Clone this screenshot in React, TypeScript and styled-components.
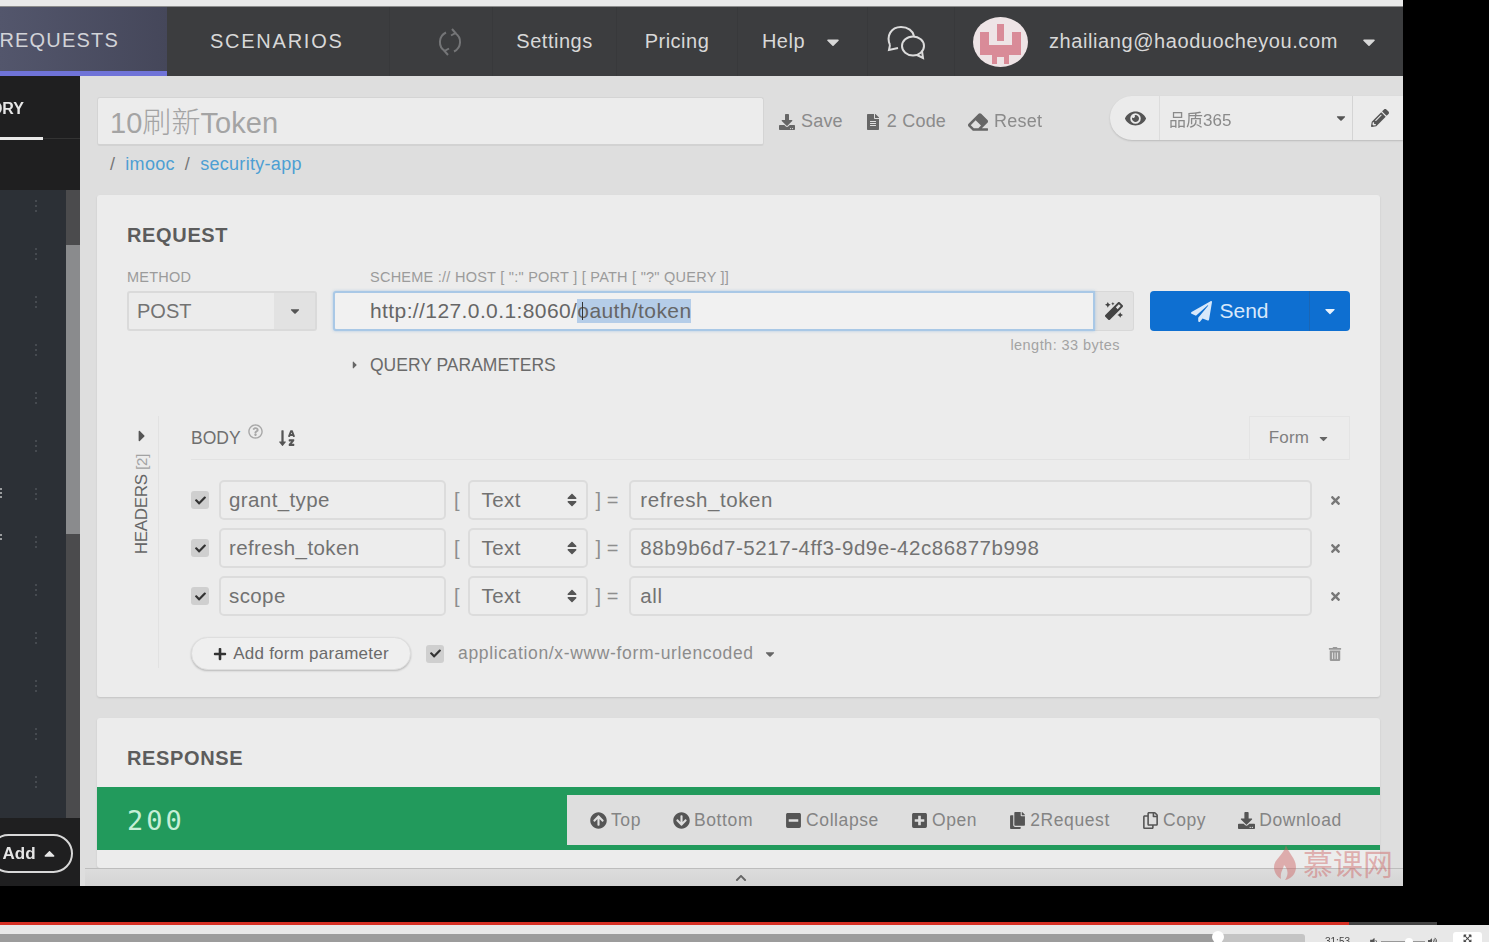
import React from 'react'
import styled, { createGlobalStyle } from 'styled-components'
import {
  FaArrowCircleDown,
  FaArrowCircleUp,
  FaCaretDown,
  FaCaretRight,
  FaCaretUp,
  FaCheck,
  FaChevronUp,
  FaDownload,
  FaEraser,
  FaEye,
  FaFileAlt,
  FaMagic,
  FaMinusSquare,
  FaPaperPlane,
  FaPencilAlt,
  FaPlus,
  FaPlusSquare,
  FaRegCopy,
  FaRegQuestionCircle,
  FaSort,
  FaSortAlphaDown,
  FaCopy,
  FaTimes,
  FaTrashAlt,
  FaVolumeDown,
  FaVolumeUp,
  FaExpandArrowsAlt,
} from 'react-icons/fa'

const GlobalStyle = createGlobalStyle`
  html, body {
    margin: 0;
    padding: 0;
    background: #000;
    overflow: hidden;
  }
  * { box-sizing: border-box; }
`

const Page = styled.div`
  width: 1489px;
  height: 942px;
  background: #000;
  overflow: hidden;
  display: flex;
  flex-direction: column;
  font-family: "Liberation Sans", Arial, sans-serif;
`

const Frame = styled.div`
  position: relative;
  width: 1403px;
  height: 886px;
  flex: none;
  display: flex;
  flex-direction: column;
  filter: blur(0.6px);
`

const TopStrip = styled.div`
  height: 7px;
  background: #e9e9e9;
  border-bottom: 1px solid #8c8c8c;
`

const Nav = styled.div`
  height: 69px;
  display: flex;
  background: #3c3d3f;
  color: #d8d8d8;
`

const RequestsTab = styled.div`
  width: 167px;
  display: flex;
  justify-content: flex-end;
  align-items: center;
  padding: 2px 48px 0 0;
  overflow: hidden;
  font-size: 20px;
  letter-spacing: 1.2px;
  white-space: nowrap;
  color: #d2d3d8;
  background: linear-gradient(90deg, #53566c, #45475a);
  border-bottom: 5px solid #6f73d8;
`

const NavTab = styled.div<{ $w: number }>`
  width: ${({ $w }) => $w}px;
  display: flex;
  align-items: center;
  justify-content: center;
  gap: 18px;
  font-size: 20px;
  letter-spacing: 0.5px;
  white-space: nowrap;
  border-right: 1px solid #38393b;
`

const ScenariosTab = styled(NavTab)`
  justify-content: flex-start;
  padding-left: 43px;
  letter-spacing: 1.75px;
`

const SyncTab = styled(NavTab)`
  padding-left: 18px;
`

const ChatTab = styled(NavTab)`
  padding-right: 10px;
`

const UserBox = styled.div`
  flex: 1;
  display: flex;
  align-items: center;
  padding-left: 18px;
  gap: 21px;
  font-size: 20px;
  letter-spacing: 0.58px;
`

const Body = styled.div`
  flex: 1;
  min-height: 0;
  display: flex;
`

const Sidebar = styled.div`
  width: 80px;
  flex: none;
  display: flex;
  flex-direction: column;
  background: #1f1f20;
  color: #e6e6e6;
`

const SideTabs = styled.div`
  height: 114px;
  flex: none;
`

const SideTab = styled.div`
  width: 43px;
  height: 64px;
  display: flex;
  justify-content: flex-end;
  align-items: center;
  padding: 4px 19px 0 0;
  overflow: hidden;
  font-size: 16px;
  font-weight: bold;
  border-bottom: 3px solid #e8e8e8;
`

const SideRule = styled.div`
  height: 1px;
  margin-top: -2px;
  margin-left: 43px;
  background: #333;
`

const SideList = styled.div`
  flex: 1;
  display: flex;
  background: #2c3036;
`

const SideRows = styled.div`
  flex: 1;
  background-image:
    linear-gradient(
      180deg,
      #464a50 0 2px,
      transparent 2px 5px,
      #464a50 5px 7px,
      transparent 7px 10px,
      #464a50 10px 12px,
      transparent 12px
    ),
    linear-gradient(
      180deg,
      #9a9c9e 0 2px,
      transparent 2px 4px,
      #9a9c9e 4px 6px,
      transparent 6px 8px,
      #9a9c9e 8px 10px,
      transparent 10px 46px,
      #9a9c9e 46px 48px,
      transparent 48px 50px,
      #9a9c9e 50px 52px,
      transparent 52px
    );
  background-size: 2px 48px, 2px 70px;
  background-position: 35px 10px, 0 298px;
  background-repeat: repeat-y, no-repeat;
`

const ScrollTrack = styled.div`
  width: 14px;
  padding-top: 55px;
  padding-bottom: 284px;
  background: #4b4b4d;
`

const ScrollThumb = styled.div`
  height: 100%;
  background: #8a8b8d;
`

const SideFooter = styled.div`
  height: 68px;
  flex: none;
  display: flex;
  align-items: center;
`

const AddPill = styled.div`
  width: 84px;
  height: 39px;
  margin-left: -11px;
  margin-top: 3px;
  display: flex;
  align-items: center;
  justify-content: center;
  gap: 5px;
  padding-right: 2px;
  border: 2px solid #d8d8d8;
  border-radius: 20px;
  font-size: 17px;
  font-weight: bold;
`

const Main = styled.div`
  flex: 1;
  min-width: 0;
  display: flex;
  flex-direction: column;
  background: #dedede;
  padding: 21px 0 0 17px;
  color: #6e6e6e;
`

const TitleRow = styled.div`
  height: 50px;
  flex: none;
  display: flex;
  align-items: flex-start;
`

const TitleInput = styled.div`
  width: 667px;
  height: 49px;
  flex: none;
  display: flex;
  align-items: center;
  padding: 0 0 2px 12px;
  background: #ececec;
  border: 1px solid #d4d4d4;
  border-bottom: 2px solid #d2d2d2;
  border-radius: 3px;
  font-family: "Liberation Sans", "Noto Sans CJK SC", sans-serif;
  font-size: 29px;
  font-weight: 300;
  letter-spacing: 0.05px;
  color: #a4a4a4;
`

const TitleActions = styled.div`
  display: flex;
  align-items: center;
  gap: 22px;
  height: 49px;
  padding-left: 15px;
`

const TitleAction = styled.div<{ $iconSize?: number }>`
  display: flex;
  align-items: center;
  gap: 6px;
  font-size: 18px;
  letter-spacing: 0.2px;
  color: #8b8b8b;
  svg { color: #666; font-size: ${({ $iconSize }) => $iconSize ?? 16}px; }
`

const EnvGroup = styled.div`
  margin-left: auto;
  width: 293px;
  height: 44px;
  margin-top: -1px;
  display: flex;
  align-items: center;
  background: #ebebeb;
  border-radius: 22px 0 0 22px;
  box-shadow: 0 1px 2px rgba(0, 0, 0, 0.16);
`

const EnvEye = styled.div`
  width: 50px;
  height: 100%;
  display: flex;
  align-items: center;
  justify-content: center;
  padding-left: 2px;
  border-right: 1px solid #dcdcdc;
  color: #555;
  font-size: 21px;
`

const EnvSelect = styled.div`
  flex: 1;
  height: 100%;
  display: flex;
  align-items: center;
  justify-content: space-between;
  padding: 0 4px 0 9px;
  font-family: "Liberation Sans", "Noto Sans CJK SC", sans-serif;
  font-size: 17px;
  color: #8a8a8a;
  border-right: 1px solid #d4d4d4;
  svg { color: #555; font-size: 14px; }
`

const EnvEdit = styled.div`
  width: 50px;
  height: 100%;
  display: flex;
  align-items: center;
  padding-left: 18px;
  font-size: 18px;
  color: #555;
`

const Breadcrumb = styled.div`
  height: 48px;
  flex: none;
  display: flex;
  align-items: flex-start;
  gap: 10px;
  padding: 7px 0 0 13px;
  font-size: 18px;
  letter-spacing: 0.3px;
  color: #777;
  a { color: #4d9fd3; }
`

const Card = styled.div`
  width: 1283px;
  flex: none;
  background: #ececec;
  border-radius: 3px;
  box-shadow: 0 1px 2px rgba(0, 0, 0, 0.12);
`

const RequestCard = styled(Card)`
  height: 502px;
  padding: 28px 30px 0 30px;
`

const ResponseCard = styled(Card)`
  height: 150px;
  margin-top: 21px;
  padding-top: 28px;
`

const SectionTitle = styled.div<{ $pad?: boolean }>`
  height: 24px;
  padding-left: ${({ $pad }) => ($pad ? 30 : 0)}px;
  font-size: 20px;
  font-weight: bold;
  letter-spacing: 0.65px;
  line-height: 24px;
  color: #5c5c5c;
`

const UrlLabels = styled.div`
  display: flex;
  margin-top: 22px;
  height: 17px;
  font-size: 14.5px;
  line-height: 17px;
  color: #9b9b9b;
  letter-spacing: 0.25px;
`

const MethodLabel = styled.div`
  width: 243px;
`

const UrlRow = styled.div`
  display: flex;
  margin-top: 5px;
  height: 40px;
`

const MethodSelect = styled.div`
  width: 190px;
  flex: none;
  display: flex;
  background: #ececec;
  border: 2px solid #dadada;
  border-radius: 3px;
  font-size: 20px;
  color: #737373;
`

const MethodValue = styled.div`
  flex: 1;
  display: flex;
  align-items: center;
  padding-left: 8px;
`

const MethodCaret = styled.div`
  width: 41px;
  display: flex;
  align-items: center;
  justify-content: center;
  background: #e2e2e2;
  font-size: 14px;
  color: #555;
`

const UrlInput = styled.div`
  position: relative;
  width: 762px;
  flex: none;
  margin-left: 16px;
  display: flex;
  align-items: center;
  padding-left: 35px;
  background: #f1f1f1;
  border: 2px solid #a9c8e6;
  border-radius: 3px 0 0 3px;
  box-shadow: 0 0 3px rgba(110, 165, 220, 0.5);
  font-size: 21px;
  letter-spacing: 0.4px;
  color: #666;
  white-space: pre;
  mark { background: #b5cde8; color: #666; }
`

const TextCursor = styled.div`
  position: absolute;
  left: 247px;
  top: 9px;
  width: 5px;
  height: 18px;
  border-left: 1px solid #333;
`

const WandButton = styled.div`
  width: 39px;
  flex: none;
  display: flex;
  align-items: center;
  justify-content: center;
  background: #e2e2e2;
  border: 1px solid #d8d8d8;
  border-left: none;
  border-radius: 0 3px 3px 0;
  color: #444;
  font-size: 18px;
`

const SendButton = styled.div`
  width: 200px;
  flex: none;
  margin-left: 16px;
  display: flex;
  background: #0e6fd1;
  border-radius: 4px;
  color: #d8e8fa;
  font-size: 21px;
`

const SendMain = styled.div`
  flex: 1;
  display: flex;
  align-items: center;
  justify-content: center;
  gap: 7px;
  padding-left: 1px;
  border-right: 1px solid #1a66b5;
`

const SendCaret = styled.div`
  width: 40px;
  display: flex;
  align-items: center;
  justify-content: center;
  font-size: 16px;
  color: #e8f2fc;
`

const LengthNote = styled.div`
  width: 993px;
  height: 16px;
  margin-top: 6px;
  text-align: right;
  font-size: 14.5px;
  letter-spacing: 0.45px;
  line-height: 16px;
  color: #a3a3a3;
`

const QueryRow = styled.div`
  display: flex;
  align-items: center;
  gap: 9px;
  height: 24px;
  padding-left: 222px;
  font-size: 17.5px;
  color: #6a6a6a;
  svg { font-size: 12px; color: #666; }
`

const BodyArea = styled.div`
  display: flex;
  margin-top: 39px;
  height: 252px;
`

const HeadersRail = styled.div`
  width: 32px;
  flex: none;
  display: flex;
  flex-direction: column;
  align-items: center;
  padding: 11px 1px 0 0;
  margin-right: 32px;
  border-right: 1px solid #e2e2e2;
  svg { font-size: 18px; color: #555; }
`

const RailLabel = styled.div`
  writing-mode: vertical-rl;
  transform: rotate(180deg);
  margin-top: 9px;
  font-size: 17px;
  letter-spacing: -0.3px;
  color: #666;
  span { color: #a2a2a2; font-size: 15px; }
`

const BodyPanel = styled.div`
  flex: 1;
  min-width: 0;
  display: flex;
  flex-direction: column;
`

const BodyHead = styled.div`
  height: 44px;
  flex: none;
  display: flex;
  align-items: center;
  border-bottom: 1px solid #e2e2e2;
`

const BodyLabel = styled.div`
  display: flex;
  align-items: center;
  font-size: 17.5px;
  color: #6f6f6f;
  padding-top: 1px;
  sup {
    margin: -12px 0 0 7px;
    font-size: 15px;
    color: #a8a8a8;
    line-height: 1;
  }
`

const SortIcon = styled.div`
  margin-left: 15px;
  font-size: 18px;
  color: #555;
  display: flex;
`

const FormTab = styled.div`
  margin-left: auto;
  width: 101px;
  height: 44px;
  display: flex;
  align-items: center;
  justify-content: center;
  gap: 8px;
  border: 1px solid #e4e4e4;
  border-bottom: none;
  font-size: 17px;
  letter-spacing: 0.2px;
  color: #808080;
  svg { font-size: 13px; color: #666; }
`

const Rows = styled.div`
  margin-top: 20px;
  display: flex;
  flex-direction: column;
  gap: 8px;
`

const ParamRow = styled.div`
  display: flex;
  align-items: center;
  height: 40px;
`

const CheckBox = styled.div`
  width: 18px;
  height: 18px;
  flex: none;
  display: flex;
  align-items: center;
  justify-content: center;
  background: #cfcfcf;
  border-radius: 3px;
  color: #333;
  font-size: 11px;
`

const FieldBox = styled.div`
  height: 40px;
  display: flex;
  align-items: center;
  background: #ededed;
  border: 2px solid #dcdcdc;
  border-radius: 5px;
  font-size: 20.5px;
  letter-spacing: 0.4px;
  color: #727272;
`

const KeyField = styled(FieldBox)`
  width: 227px;
  margin-left: 10px;
  padding-left: 8px;
`

const Bracket = styled.div`
  margin-left: 8px;
  font-size: 20px;
  color: #8e8e8e;
  white-space: pre;
`

const TypeField = styled(FieldBox)`
  width: 120px;
  margin-left: 8px;
  padding: 0 6px 0 12px;
  justify-content: space-between;
  svg { font-size: 16px; color: #555; }
`

const ValueField = styled(FieldBox)`
  width: 683px;
  margin-left: 11px;
  padding-left: 9px;
  letter-spacing: 0.55px;
`

const RemoveIcon = styled.div`
  margin-left: 17px;
  display: flex;
  font-size: 13px;
  color: #777;
`

const AddRow = styled.div`
  margin-top: 21px;
  display: flex;
  align-items: center;
  height: 33px;
`

const AddParamButton = styled.div`
  width: 220px;
  height: 33px;
  display: flex;
  align-items: center;
  justify-content: center;
  gap: 6px;
  background: #efefef;
  border: 1px solid #dedede;
  border-radius: 17px;
  box-shadow: 0 1px 2px rgba(0, 0, 0, 0.22);
  font-size: 17px;
  letter-spacing: 0.25px;
  color: #6a6a6a;
  svg { font-size: 14px; color: #333; }
`

const EncodingCheck = styled(CheckBox)`
  margin-left: 15px;
`

const EncodingLabel = styled.div`
  display: flex;
  align-items: center;
  gap: 9px;
  margin-left: 14px;
  font-size: 17.5px;
  letter-spacing: 0.65px;
  color: #8c8c8c;
  svg { font-size: 14px; color: #666; }
`

const TrashIcon = styled.div`
  margin-left: auto;
  margin-right: 8px;
  display: flex;
  font-size: 14px;
  color: #999;
`

const StatusBar = styled.div`
  height: 63px;
  margin-top: 17px;
  display: flex;
  background: #229a5c;
`

const StatusCode = styled.div`
  width: 470px;
  flex: none;
  display: flex;
  align-items: center;
  padding: 3px 0 0 30px;
  font-family: "DejaVu Sans Mono", monospace;
  font-size: 27px;
  letter-spacing: 3px;
  color: #c6efd6;
`

const ResponseTools = styled.div`
  flex: 1;
  margin: 8px 0 5px;
  display: flex;
  align-items: center;
  gap: 32px;
  padding-left: 23px;
  background: #dedede;
`

const ToolItem = styled.div`
  display: flex;
  align-items: center;
  gap: 4px;
  font-size: 17.5px;
  letter-spacing: 0.6px;
  color: #848484;
  white-space: nowrap;
  svg { font-size: 17px; color: #555; }
`

const BottomBar = styled.div`
  flex: 1;
  display: flex;
  align-items: flex-end;
  justify-content: center;
  margin-left: -12px;
  padding: 0 6px 2px 0;
  font-size: 12px;
  color: #666;
  background: linear-gradient(180deg, #dcdcdc, #d4d4d4);
  border-top: 1px solid #bdbdbd;
`

const Watermark = styled.div`
  position: absolute;
  left: 1273px;
  top: 844px;
  display: flex;
  align-items: center;
  gap: 6px;
  font-family: "Noto Sans CJK SC", sans-serif;
  font-size: 30px;
  line-height: 36px;
  color: rgba(205, 95, 95, 0.45);
`

const VideoGap = styled.div`
  height: 36px;
  flex: none;
`

const ProgressLine = styled.div`
  height: 3px;
  flex: none;
  width: 1437px;
  background: linear-gradient(90deg, #d63024 0 1349px, #444 1349px);
`

const ControlBar = styled.div`
  flex: 1;
  display: flex;
  align-items: flex-start;
  background: #e8e8e8;
  filter: blur(0.4px);
`

const SeekTrack = styled.div`
  position: relative;
  width: 1305px;
  height: 8px;
  margin-top: 9px;
  flex: none;
  background: linear-gradient(90deg, #9c9c9c 0 1218px, #c4c4c4 1218px);
  border-radius: 0 3px 0 0;
`

const SeekThumb = styled.div`
  position: absolute;
  left: 1212px;
  top: -3px;
  width: 12px;
  height: 12px;
  border-radius: 50%;
  background: #fff;
`

const TimeLabel = styled.div`
  margin: 11px 0 0 20px;
  font-size: 10px;
  color: #444;
`

const VolumeBox = styled.div`
  display: flex;
  align-items: center;
  gap: 3px;
  margin: 12px 0 0 19px;
  font-size: 9px;
  color: #555;
`

const VolumeLine = styled.div`
  position: relative;
  width: 44px;
  height: 2px;
  background: #999;
`

const VolumeKnob = styled.div`
  position: absolute;
  left: 24px;
  top: -3px;
  width: 8px;
  height: 8px;
  border-radius: 50%;
  background: #fff;
`

const FullscreenBtn = styled.div`
  width: 29px;
  height: 14px;
  margin: 7px 0 0 16px;
  display: flex;
  justify-content: center;
  padding-top: 2px;
  background: #fff;
  border-radius: 3px;
  font-size: 9px;
  color: #444;
`

const SyncIcon = () => (
  <svg width="30" height="30" viewBox="0 0 30 30" fill="none" stroke="#747577" strokeWidth="2">
    <path d="M11 5.5 A10.5 10.5 0 0 0 10 24" />
    <path d="M19 24.5 A10.5 10.5 0 0 0 20 6" />
    <path d="M17 2 l3.5 4 -4.5 2.5" />
    <path d="M13 28 l-3.5 -4 4.5 -2.5" />
  </svg>
)

const ChatIcon = () => (
  <svg width="40" height="36" viewBox="0 0 40 36" fill="none" stroke="#dcdcdc" strokeWidth="2">
    <path d="M4 21 C0 12 5 3 15 3 C22 3 27 7 28 12" />
    <path d="M4 21 L3 26 L12 24" />
    <ellipse cx="27" cy="22" rx="11" ry="9.5" />
    <path d="M31 31 L37 34 L36 27" />
  </svg>
)

const Avatar = () => (
  <svg width="55" height="50" viewBox="0 0 55 50">
    <ellipse cx="27.5" cy="25" rx="27.5" ry="25" fill="#eee4e6" />
    <path d="M24 7 H31 V24 H24 Z" fill="#d98b98" />
    <path
      d="M7 15 H16 V28 H39 V15 H48 V38 H36 V47 H31 V40 H24 V47 H19 V38 H7 Z"
      fill="#d98b98"
    />
  </svg>
)

const Flame = () => (
  <svg width="24" height="36" viewBox="0 0 24 36" fill="rgba(205,95,95,0.45)">
    <path d="M13 1 C15 9 23 14 23 23 C23 30 18 35 12 36 C16 31 15 25 11 21 C10 26 7 28 8 35 C3 32 1 27 1 23 C1 15 11 11 13 1 Z" />
  </svg>
)

const params = [
  { key: 'grant_type', value: 'refresh_token' },
  { key: 'refresh_token', value: '88b9b6d7-5217-4ff3-9d9e-42c86877b998' },
  { key: 'scope', value: 'all' },
]

const tools = [
  { icon: <FaArrowCircleUp />, label: 'Top' },
  { icon: <FaArrowCircleDown />, label: 'Bottom' },
  { icon: <FaMinusSquare />, label: 'Collapse' },
  { icon: <FaPlusSquare />, label: 'Open' },
  { icon: <FaCopy />, label: '2Request' },
  { icon: <FaRegCopy />, label: 'Copy' },
  { icon: <FaDownload />, label: 'Download' },
]

export default function App() {
  return (
    <Page>
      <GlobalStyle />
      <Frame>
        <TopStrip />
        <Nav>
          <RequestsTab>REQUESTS</RequestsTab>
          <ScenariosTab $w={223}>SCENARIOS</ScenariosTab>
          <SyncTab $w={103}><SyncIcon /></SyncTab>
          <NavTab $w={124}>Settings</NavTab>
          <NavTab $w={121}>Pricing</NavTab>
          <NavTab $w={130}>Help <FaCaretDown /></NavTab>
          <ChatTab $w={87}><ChatIcon /></ChatTab>
          <UserBox>
            <Avatar />
            zhailiang@haoduocheyou.com
            <FaCaretDown />
          </UserBox>
        </Nav>
        <Body>
          <Sidebar>
            <SideTabs>
              <SideTab>HISTORY</SideTab>
              <SideRule />
            </SideTabs>
            <SideList>
              <SideRows />
              <ScrollTrack><ScrollThumb /></ScrollTrack>
            </SideList>
            <SideFooter>
              <AddPill>Add <FaCaretUp /></AddPill>
            </SideFooter>
          </Sidebar>
          <Main>
            <TitleRow>
              <TitleInput>10刷新Token</TitleInput>
              <TitleActions>
                <TitleAction><FaDownload /> Save</TitleAction>
                <TitleAction><FaFileAlt /> 2 Code</TitleAction>
                <TitleAction $iconSize={20}><FaEraser /> Reset</TitleAction>
              </TitleActions>
              <EnvGroup>
                <EnvEye><FaEye /></EnvEye>
                <EnvSelect>品质365 <FaCaretDown /></EnvSelect>
                <EnvEdit><FaPencilAlt /></EnvEdit>
              </EnvGroup>
            </TitleRow>
            <Breadcrumb>
              <span>/</span><a>imooc</a><span>/</span><a>security-app</a>
            </Breadcrumb>
            <RequestCard>
              <SectionTitle>REQUEST</SectionTitle>
              <UrlLabels>
                <MethodLabel>METHOD</MethodLabel>
                <div>SCHEME :// HOST [ ":" PORT ] [ PATH [ "?" QUERY ]]</div>
              </UrlLabels>
              <UrlRow>
                <MethodSelect>
                  <MethodValue>POST</MethodValue>
                  <MethodCaret><FaCaretDown /></MethodCaret>
                </MethodSelect>
                <UrlInput>
                  http://127.0.0.1:8060/<mark>oauth/token</mark>
                  <TextCursor />
                </UrlInput>
                <WandButton><FaMagic /></WandButton>
                <SendButton>
                  <SendMain><FaPaperPlane /> Send</SendMain>
                  <SendCaret><FaCaretDown /></SendCaret>
                </SendButton>
              </UrlRow>
              <LengthNote>length: 33 bytes</LengthNote>
              <QueryRow><FaCaretRight /> QUERY PARAMETERS</QueryRow>
              <BodyArea>
                <HeadersRail>
                  <FaCaretRight />
                  <RailLabel>HEADERS <span>[2]</span></RailLabel>
                </HeadersRail>
                <BodyPanel>
                  <BodyHead>
                    <BodyLabel>BODY <sup><FaRegQuestionCircle /></sup></BodyLabel>
                    <SortIcon><FaSortAlphaDown /></SortIcon>
                    <FormTab>Form <FaCaretDown /></FormTab>
                  </BodyHead>
                  <Rows>
                    {params.map(p => (
                      <ParamRow key={p.key}>
                        <CheckBox><FaCheck /></CheckBox>
                        <KeyField>{p.key}</KeyField>
                        <Bracket>[</Bracket>
                        <TypeField>Text <FaSort /></TypeField>
                        <Bracket>{'] ='}</Bracket>
                        <ValueField>{p.value}</ValueField>
                        <RemoveIcon><FaTimes /></RemoveIcon>
                      </ParamRow>
                    ))}
                  </Rows>
                  <AddRow>
                    <AddParamButton><FaPlus /> Add form parameter</AddParamButton>
                    <EncodingCheck><FaCheck /></EncodingCheck>
                    <EncodingLabel>application/x-www-form-urlencoded <FaCaretDown /></EncodingLabel>
                    <TrashIcon><FaTrashAlt /></TrashIcon>
                  </AddRow>
                </BodyPanel>
              </BodyArea>
            </RequestCard>
            <ResponseCard>
              <SectionTitle $pad>RESPONSE</SectionTitle>
              <StatusBar>
                <StatusCode>200</StatusCode>
                <ResponseTools>
                  {tools.map(t => (
                    <ToolItem key={t.label}>{t.icon}{t.label}</ToolItem>
                  ))}
                </ResponseTools>
              </StatusBar>
            </ResponseCard>
            <BottomBar><FaChevronUp /></BottomBar>
          </Main>
        </Body>
        <Watermark><Flame />慕课网</Watermark>
      </Frame>
      <VideoGap />
      <ProgressLine />
      <ControlBar>
        <SeekTrack><SeekThumb /></SeekTrack>
        <TimeLabel>31:53</TimeLabel>
        <VolumeBox>
          <FaVolumeDown />
          <VolumeLine><VolumeKnob /></VolumeLine>
          <FaVolumeUp />
        </VolumeBox>
        <FullscreenBtn><FaExpandArrowsAlt /></FullscreenBtn>
      </ControlBar>
    </Page>
  )
}
